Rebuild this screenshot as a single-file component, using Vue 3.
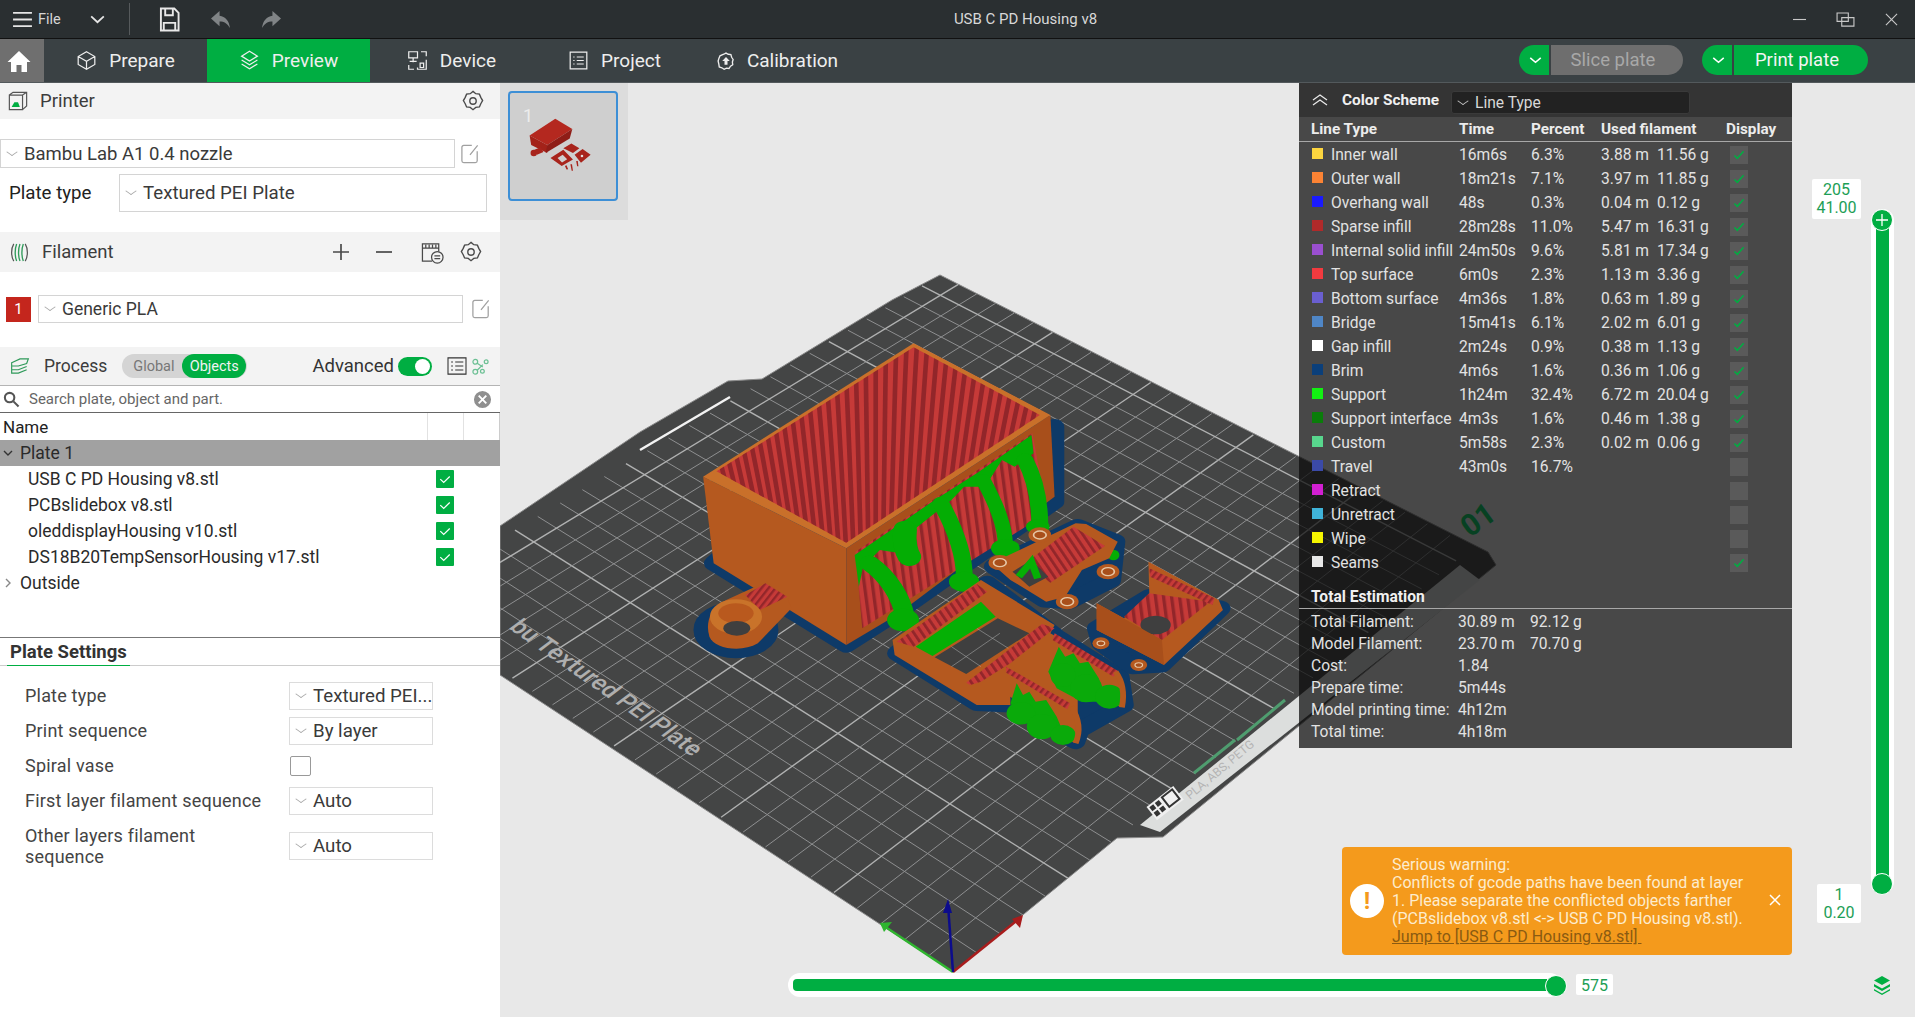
<script setup>
import { computed } from 'vue'

const tabs = [
  { name: 'Prepare', icon: 'cube' },
  { name: 'Preview', icon: 'layers', active: true },
  { name: 'Device', icon: 'device' },
  { name: 'Project', icon: 'list' },
  { name: 'Calibration', icon: 'calib' }
]

const objects = [
  'USB C PD Housing v8.stl',
  'PCBslidebox v8.stl',
  'oleddisplayHousing v10.stl',
  'DS18B20TempSensorHousing v17.stl'
]

const lineTypes = [
  ['#fcd53f', 'Inner wall', '16m6s', '6.3%', '3.88 m', '11.56 g', true],
  ['#fb8334', 'Outer wall', '18m21s', '7.1%', '3.97 m', '11.85 g', true],
  ['#1a1aff', 'Overhang wall', '48s', '0.3%', '0.04 m', '0.12 g', true],
  ['#b02a2a', 'Sparse infill', '28m28s', '11.0%', '5.47 m', '16.31 g', true],
  ['#9a4fd0', 'Internal solid infill', '24m50s', '9.6%', '5.81 m', '17.34 g', true],
  ['#f23a3f', 'Top surface', '6m0s', '2.3%', '1.13 m', '3.36 g', true],
  ['#6a5fd0', 'Bottom surface', '4m36s', '1.8%', '0.63 m', '1.89 g', true],
  ['#4f86c6', 'Bridge', '15m41s', '6.1%', '2.02 m', '6.01 g', true],
  ['#ffffff', 'Gap infill', '2m24s', '0.9%', '0.38 m', '1.13 g', true],
  ['#0b3f7a', 'Brim', '4m6s', '1.6%', '0.36 m', '1.06 g', true],
  ['#12f012', 'Support', '1h24m', '32.4%', '6.72 m', '20.04 g', true],
  ['#0a7d0a', 'Support interface', '4m3s', '1.6%', '0.46 m', '1.38 g', true],
  ['#58d68d', 'Custom', '5m58s', '2.3%', '0.02 m', '0.06 g', true],
  ['#3b4aa8', 'Travel', '43m0s', '16.7%', '', '', false],
  ['#d21fd2', 'Retract', '', '', '', '', false],
  ['#3fb3d8', 'Unretract', '', '', '', '', false],
  ['#f5f500', 'Wipe', '', '', '', '', false],
  ['#e8e8e8', 'Seams', '', '', '', '', true]
]

const totals = [
  ['Total Filament:', '30.89 m', '92.12 g'],
  ['Model Filament:', '23.70 m', '70.70 g'],
  ['Cost:', '1.84', ''],
  ['Prepare time:', '5m44s', ''],
  ['Model printing time:', '4h12m', ''],
  ['Total time:', '4h18m', '']
]

// unit square -> bed corners, so the grid gets the same perspective as the plate
const quad = [[953, 972], [397, 601], [940, 275], [1473, 547]]

function makeProjector(p) {
  const [[x0, y0], [x1, y1], [x2, y2], [x3, y3]] = p
  const dx1 = x1 - x2
  const dx2 = x3 - x2
  const sx = x0 - x1 + x2 - x3
  const dy1 = y1 - y2
  const dy2 = y3 - y2
  const sy = y0 - y1 + y2 - y3
  const den = dx1 * dy2 - dx2 * dy1
  const g = (sx * dy2 - dx2 * sy) / den
  const h = (dx1 * sy - sx * dy1) / den
  const a = x1 - x0 + g * x1
  const b = x3 - x0 + h * x3
  const d = y1 - y0 + g * y1
  const e = y3 - y0 + h * y3
  return (u, v) => {
    const w = g * u + h * v + 1
    return [(a * u + b * v + x0) / w, (d * u + e * v + y0) / w]
  }
}

const gridLines = computed(() => {
  const project = makeProjector(quad)
  const lines = []
  const n = 26
  for (let i = 1; i < n; i++) {
    const t = i / n
    const pairs = [[project(t, 0), project(t, 1)], [project(0, t), project(1, t)]]
    for (const [from, to] of pairs) {
      lines.push({ x1: from[0], y1: from[1], x2: to[0], y2: to[1], major: i % 5 === 0 })
    }
  }
  return lines
})

// infill on the big top face fans out towards a far point below it
const fanLines = computed(() => {
  const out = []
  for (let x = 40; x < 1200; x += 26) {
    out.push({ x1: x, y1: 0, x2: 560, y2: 2300 })
  }
  return out
})

const pcbTabs = [[855, 788], [950, 705], [1112, 815], [1015, 905]]
const sensorTabs = [[1095, 1030], [1185, 1095]]
const blobs = [
  [1005, 1125, 30, 36], [1060, 1165, 38, 42], [1115, 1190, 34, 36],
  [905, 1240, 34, 34], [955, 1280, 36, 38], [1005, 1305, 30, 30]
]
</script>

<template>
  <div class="app">
    <header class="titlebar">
      <div class="file-menu">
        <svg class="ico-menu" viewBox="0 0 22 18"><path d="M1 2h20M1 9h20M1 16h20" /></svg>
        <span>File</span>
        <svg class="ico-caret" viewBox="0 0 16 10"><path d="M1 1.5l7 6.5 7-6.5" /></svg>
      </div>
      <i class="vline"></i>
      <svg class="ico-save" viewBox="0 0 22 26"><path d="M2 1.5h14l4.5 4.5v18.5H2zM6.500 1.500v7h8v-7M5 24.500v-8h12v8" /></svg>
      <svg class="ico-arrow" viewBox="0 0 22 20"><path d="M10 1L1 9l9 8v-5c5 0 8 2 11 7-1-8-5-12-11-13z" /></svg>
      <svg class="ico-arrow" viewBox="0 0 22 20"><path d="M12 1l9 8-9 8v-5c-5 0-8 2-11 7 1-8 5-12 11-13z" /></svg>
      <div class="title">USB C PD Housing v8</div>
      <div class="win-btns">
        <svg viewBox="0 0 14 14"><path d="M0 7h14" /></svg>
        <svg viewBox="0 0 20 16" class="restore"><path d="M1 1h12v9H1zM6 6h13v9H6z" /></svg>
        <svg viewBox="0 0 14 14"><path d="M1 1l12 12M13 1L1 13" /></svg>
      </div>
    </header>

    <nav class="navbar">
      <div class="home">
        <svg viewBox="0 0 24 24"><path d="M12 2L0.5 13H4v10h5.5v-7h5v7H20V13h3.5z" /></svg>
      </div>
      <div v-for="tab in tabs" :key="tab.name" class="tab" :class="{ active: tab.active }">
        <svg class="tab-ico" :class="tab.icon" viewBox="0 0 24 24">
          <template v-if="tab.icon === 'cube'">
            <path d="M12 2l9.500 5.500v9L12 22l-9.500-5.500v-9zM2.500 7.500L12 13l9.500-5.500M12 13v9" />
          </template>
          <template v-else-if="tab.icon === 'layers'">
            <path d="M12 1.500l9 5.500-9 5.500-9-5.500zM3 11.500l9 5.500 9-5.500M3 16l9 5.500 9-5.500" />
          </template>
          <template v-else-if="tab.icon === 'device'">
            <path d="M2 2h10v7H2zM7 9v5M3 13h8M16 2h6v5M2 17v5h6M22 11v11H12v-2M15 15h4v5h-4z" />
          </template>
          <template v-else-if="tab.icon === 'list'">
            <path d="M2.500 2.500h19v19h-19zM6 8h1.500M10 8h8M6 12h1.500M10 12h8M6 16h1.500M10 16h8" />
          </template>
          <template v-else>
            <path d="M9 3l3-1.500L15 3l3.500.5 1 3.500 2 3-1 3.500.5 3.500-3 2-2 3-3.500-.5-3 1.500-3-2-3.500-1-.5-3.500L1.500 12l1-3.500L4 5z" />
            <path class="fill-white" d="M12 6.500l5 5.500h-3v5h-4v-5H7z" />
          </template>
        </svg>
        <span>{{ tab.name }}</span>
      </div>
      <div class="nav-actions">
        <div class="pill-btn disabled">
          <span class="pill-drop"><svg viewBox="0 0 14 8"><path d="M1 1l6 5 6-5" /></svg></span>
          <span class="pill-label">Slice plate</span>
        </div>
        <div class="pill-btn">
          <span class="pill-drop"><svg viewBox="0 0 14 8"><path d="M1 1l6 5 6-5" /></svg></span>
          <span class="pill-label">Print plate</span>
        </div>
      </div>
    </nav>

    <main class="workspace">
      <aside class="sidebar">
        <section class="side-head printer-head">
          <svg class="head-ico" viewBox="0 0 22 22">
            <path class="thin" d="M1.500 4.500h14.500v16H1.500zM1.500 4.500l4-3h15v15l-4.500 4M16 4.500l4.500-3" />
            <path class="grn" d="M4 17.500l3-5h4l2 5z" />
          </svg>
          <span class="head-text">Printer</span>
          <svg class="gear right-gear" viewBox="0 0 24 24"><path d="M12 1.500l3 2.500 4 .500 1.500 3.500 2 3.500-2 3.500-1.500 3.500-4 .500-3 2.500-3-2.500-4-.500L3.500 15l-2-3.500 2-3.500L5 4.500 9 4z" /><circle cx="12" cy="12" r="3.500" /></svg>
        </section>

        <div class="printer-row">
          <div class="select printer-select"><i class="chev"></i>Bambu Lab A1 0.4 nozzle</div>
          <svg class="edit-ico" viewBox="0 0 20 22"><path d="M12 1.500H3a2 2 0 0 0-2 2v15a2 2 0 0 0 2 2h13a2 2 0 0 0 2-2V8M18.500 1.500L10 12" /></svg>
        </div>
        <div class="plate-row">
          <span class="plate-label">Plate type</span>
          <div class="select plate-select"><i class="chev"></i>Textured PEI Plate</div>
        </div>

        <section class="side-head filament-head">
          <svg class="head-ico fil-ico" viewBox="0 0 20 22">
            <path class="thin" d="M4 2c-3 5-3 13 0 18M16 2c3 5 3 13 0 18" />
            <path class="grn-line" d="M7 2c-2 5-2 13 0 18M10.500 2c-2 5-2 13 0 18M14 2c-2 5-2 13 0 18" />
          </svg>
          <span class="head-text">Filament</span>
          <svg class="act-ico plus" viewBox="0 0 16 16"><path d="M8 0v16M0 8h16" /></svg>
          <svg class="act-ico minus" viewBox="0 0 16 16"><path d="M0 8h16" /></svg>
          <svg class="act-ico sync" viewBox="0 0 24 24">
            <path d="M1.500 15V3h17v8M1.500 7.500h17M5 4v3.500M8.500 4v3.500M12 4v3.500M15.500 4v3.500M1.500 15v6h10" />
            <circle cx="17" cy="17" r="6" /><path d="M14 15.500h6M20 18.500h-6" />
          </svg>
          <svg class="gear" viewBox="0 0 24 24"><path d="M12 1.500l3 2.500 4 .500 1.500 3.500 2 3.500-2 3.500-1.500 3.500-4 .500-3 2.500-3-2.500-4-.500L3.500 15l-2-3.500 2-3.500L5 4.500 9 4z" /><circle cx="12" cy="12" r="3.500" /></svg>
        </section>

        <div class="filament-row">
          <span class="fil-badge">1</span>
          <div class="select fil-select"><i class="chev"></i>Generic PLA</div>
          <svg class="edit-ico" viewBox="0 0 20 22"><path d="M12 1.500H3a2 2 0 0 0-2 2v15a2 2 0 0 0 2 2h13a2 2 0 0 0 2-2V8M18.500 1.500L10 12" /></svg>
        </div>

        <section class="side-head process-head">
          <svg class="head-ico proc-ico" viewBox="0 0 24 20">
            <path class="grn-line" d="M2 6l10-4.500h10L20 7 10 10H2zM2 10.500v4h8l10-4M2 15v3.500h8l10-4" />
          </svg>
          <span class="head-text">Process</span>
          <div class="switch-pill"><span class="off">Global</span><span class="on">Objects</span></div>
          <span class="adv">Advanced</span>
          <span class="toggle"><i></i></span>
          <svg class="list-btn" viewBox="0 0 22 20"><path d="M1 1h20v18H1zM4.500 5.500h2M9 5.500h9M4.500 10h2M9 10h9M4.500 14.500h2M9 14.500h9" /></svg>
          <svg class="scissor" viewBox="0 0 18 18"><circle cx="3.500" cy="4" r="2.500" /><circle cx="3.500" cy="14.500" r="2.500" /><circle cx="15" cy="4" r="2" /><circle cx="11" cy="14" r="2" /><path d="M5.500 5.500l6 4M5.500 13l6-6" /></svg>
        </section>

        <div class="search">
          <svg class="mag" viewBox="0 0 18 18"><circle cx="7" cy="7" r="5" /><path d="M11 11l5.500 5.500" /></svg>
          <span>Search plate, object and part.</span>
          <svg class="clear" viewBox="0 0 20 20"><circle cx="10" cy="10" r="10" /><path d="M6 6l8 8M14 6l-8 8" /></svg>
        </div>
        <div class="tree-head"><span>Name</span><i></i><i></i></div>
        <div class="tree-row plate-one"><svg class="tw" viewBox="0 0 10 6"><path d="M1 1l4 4 4-4" /></svg>Plate 1</div>
        <div v-for="obj in objects" :key="obj" class="tree-row obj">
          <span>{{ obj }}</span>
          <span class="chk"><svg viewBox="0 0 14 10"><path d="M1.500 4.500L5.500 8.500 12.500 1.500" /></svg></span>
        </div>
        <div class="tree-row"><svg class="tw side" viewBox="0 0 6 10"><path d="M1 1l4 4-4 4" /></svg>Outside</div>

        <div class="settings-tabs"><span>Plate Settings</span></div>
        <div class="settings">
          <div class="set-row">
            <label>Plate type</label>
            <div class="select set-select"><i class="chev"></i>Textured PEI...</div>
          </div>
          <div class="set-row">
            <label>Print sequence</label>
            <div class="select set-select"><i class="chev"></i>By layer</div>
          </div>
          <div class="set-row">
            <label>Spiral vase</label>
            <span class="check-box"></span>
          </div>
          <div class="set-row">
            <label>First layer filament sequence</label>
            <div class="select set-select"><i class="chev"></i>Auto</div>
          </div>
          <div class="set-row tall">
            <label>Other layers filament<br>sequence</label>
            <div class="select set-select"><i class="chev"></i>Auto</div>
          </div>
        </div>
      </aside>

      <section class="canvas">
        <svg class="scene" viewBox="500 83 1415 934" preserveAspectRatio="none">
          <defs>
            <pattern id="stripes" width="17" height="17" patternUnits="userSpaceOnUse" patternTransform="rotate(-28)">
              <rect width="17" height="17" fill="#c63a38" />
              <rect width="7" height="17" fill="#92262a" />
            </pattern>
            <pattern id="stripesB" width="14" height="14" patternUnits="userSpaceOnUse" patternTransform="rotate(32)">
              <rect width="14" height="14" fill="#c63a38" />
              <rect width="6" height="14" fill="#92262a" />
            </pattern>
            <pattern id="stripesC" width="19" height="19" patternUnits="userSpaceOnUse" patternTransform="rotate(-6)">
              <rect width="19" height="19" fill="#c63a38" />
              <rect width="8" height="19" fill="#92262a" />
            </pattern>
            <clipPath id="topFace"><polygon points="182,514 650,142 950,345 490,728" /></clipPath>
            <clipPath id="bedClip"><polygon points="500,526 640,432 728,381 762,379 892,300 940,275 1488,552 1496,565 1163,837 1117,838 953,972 500,675" /></clipPath>
          </defs>

          <polygon class="bed" points="500,526 640,432 728,381 762,379 892,300 940,275 1488,552 1496,565 1163,837 1117,838 953,972 500,675" />
          <g clip-path="url(#bedClip)">
            <line v-for="(l, i) in gridLines" :key="i" :x1="l.x1" :y1="l.y1" :x2="l.x2" :y2="l.y2" class="grid" :class="{ major: l.major }" />
          </g>
          <path d="M640 450L730 397" class="white-bar" />
          <polygon points="1140,825 1160,832 1480,580 1460,565" fill="#dcdedd" />
          <path d="M1194 773L1235 740M1237 740L1285 700" class="bed-green" />
          <g transform="translate(1153 812) rotate(-38)">
            <rect x="-2" y="-8" width="34" height="17" fill="#f0f0f0" />
            <rect x="0" y="-6" width="5" height="5" fill="#333" />
            <rect x="7" y="-6" width="5" height="5" fill="#333" />
            <rect x="0" y="1" width="5" height="5" fill="#333" />
            <rect x="7" y="1" width="5" height="5" fill="#333" />
            <rect x="16" y="-6" width="13" height="12" fill="none" stroke="#333" stroke-width="2" />
          </g>
          <text class="strip-text" transform="translate(1190 800) rotate(-40)">PLA, ABS, PETG</text>
          <text class="bed-text" transform="translate(508 628) rotate(35) skewX(-18)">bu Textured PEI Plate</text>
          <text class="bed-num" transform="translate(1470 538) rotate(-36)">01</text>

          <!-- model, in the crop's own coordinates -->
          <g transform="translate(640 300) scale(.4209 .3333)">
            <g class="brim">
              <polygon points="175,790 490,1035 620,930 985,605 985,380 700,500 300,650" />
              <ellipse cx="228" cy="990" rx="78" ry="62" />
              <polygon points="610,1060 800,1210 880,1215 1035,1325 1045,1290 1150,1215 1140,1130 990,1010 960,980 825,850" />
              <polygon points="840,800 1040,680 1130,725 1120,840 1020,905 960,900" />
              <polygon points="1085,985 1210,890 1380,925 1240,1095 1170,1100 1095,1030" />
            </g>

            <!-- main housing -->
            <polygon fill="#b5591f" points="150,530 490,745 490,1035 175,790" />
            <polygon fill="#a84f1b" points="490,745 975,345 985,590 610,945 490,1035" />
            <polygon fill="#c9702a" points="150,530 650,130 975,345 490,745" />
            <polygon fill="#c63a38" points="182,514 650,142 950,345 490,728" />
            <g clip-path="url(#topFace)">
              <line v-for="(l, i) in fanLines" :key="i" :x1="l.x1" :y1="l.y1" :x2="l.x2" :y2="l.y2" class="fan" />
            </g>
            <polygon fill="url(#stripesC)" points="512,755 932,400 968,640 528,985" />

            <!-- trees under the overhang -->
            <polygon class="tree-fill" points="510,765 625,665 700,600 800,520 930,405 935,460 890,500 860,480 820,560 770,560 740,600 700,640 650,690 620,760 570,750 530,800 520,860" />
            <g class="tree">
              <path d="M545 790C590 830 620 890 630 950" stroke-width="46" />
              <path d="M630 690C625 730 635 760 640 770" stroke-width="56" />
              <path d="M715 610C750 690 775 770 770 850" stroke-width="40" />
              <path d="M815 540C845 610 870 680 868 745" stroke-width="36" />
              <path d="M915 480C940 540 950 610 950 680" stroke-width="40" />
            </g>
            <g fill="#04ad04">
              <ellipse cx="625" cy="960" rx="38" ry="34" />
              <ellipse cx="770" cy="845" rx="36" ry="30" />
              <ellipse cx="868" cy="745" rx="34" ry="28" />
              <ellipse cx="945" cy="680" rx="28" ry="22" />
              <ellipse cx="1125" cy="765" rx="14" ry="16" />
            </g>

            <!-- screw tab -->
            <path fill="#b5591f" d="M350 895L300 845 205 900C165 925 155 970 165 1010 175 1045 240 1060 280 1030L360 925z" />
            <path fill="url(#stripesB)" d="M298 850L350 890 285 930 250 885z" />
            <ellipse cx="228" cy="950" rx="62" ry="52" fill="#c9732a" />
            <ellipse cx="228" cy="940" rx="42" ry="30" fill="#b9591e" />
            <ellipse cx="230" cy="985" rx="32" ry="22" fill="#3f3f3f" />

            <!-- display frame -->
            <polygon fill="#b5591f" points="600,1020 810,840 985,975 975,1000 1135,1115 1150,1222 1125,1215 1040,1120 1040,1330 1010,1320 880,1190 880,1215 800,1215 605,1065" />
            <polygon fill="url(#stripes)" points="610,1025 800,852 825,875 650,1040" />
            <polygon fill="#3f3f3f" points="700,1072 850,955 925,1000 775,1122" />
            <path d="M740 1040l70 60M800 985l75 60M740 1100l115-100" class="grid major" />
            <polygon fill="#05b005" points="655,1040 810,905 845,950 695,1068" />
            <polygon fill="url(#stripes)" points="775,1148 955,972 985,985 880,1090 810,1145 785,1155" />
            <polygon fill="url(#stripesB)" points="985,1000 1135,1112 1125,1130 980,1020" />
            <polygon fill="url(#stripesB)" points="870,1100 1022,1210 1015,1228 870,1118" />
            <g fill="#0aaa0a">
              <path d="M995 1040l15 30 20-10 15 30 20-5 25 50 20 70-60 0-60-40-20-50zM895 1150l15 35 15-10 15 30 25-5 25 50 20 60-60-10-50-50-20-40z" />
              <ellipse v-for="b in blobs" :key="b[0]" :cx="b[0]" :cy="b[1]" :rx="b[2]" :ry="b[3]" />
            </g>
            <path d="M1130 1115C1150 1150 1150 1190 1145 1222M1025 1220C1045 1260 1045 1300 1035 1330" fill="none" stroke="#b5591f" stroke-width="14" />

            <!-- pcb slide box -->
            <polygon fill="#b5591f" points="835,790 1035,670 1060,672 1135,725 1115,775 1050,810 1010,890 965,905 880,840" />
            <polygon fill="url(#stripes)" points="915,790 1030,680 1105,738 975,848" />
            <polygon fill="#3f3f3f" points="885,815 930,780 970,830 925,860" />
            <path d="M900 830l30-45 15 50" fill="none" stroke="#05b005" stroke-width="18" />
            <g v-for="c in pcbTabs" :key="c[0]">
              <ellipse :cx="c[0]" :cy="c[1]" rx="27" ry="23" fill="#b5591f" />
              <ellipse :cx="c[0]" :cy="c[1]" rx="15" ry="12" fill="#a84f1b" stroke="#e6c7a6" stroke-width="4" />
            </g>

            <!-- sensor box -->
            <polygon fill="#b5591f" points="1208,785 1375,900 1385,930 1245,1095 1085,990 1085,910 1150,955 1210,880" />
            <polygon fill="url(#stripesC)" points="1150,950 1210,880 1355,905 1240,1020" />
            <ellipse cx="1225" cy="975" rx="36" ry="28" fill="#3f3f3f" />
            <polygon fill="#a84f1b" points="1085,910 1240,1020 1245,1095 1085,990" />
            <polygon fill="url(#stripesB)" points="1210,805 1365,895 1360,915 1212,830" />
            <g v-for="c in sensorTabs" :key="c[0]">
              <ellipse :cx="c[0]" :cy="c[1]" rx="20" ry="18" fill="#b5591f" />
              <ellipse :cx="c[0]" :cy="c[1]" rx="9" ry="7" fill="#a84f1b" stroke="#e6c7a6" stroke-width="3" />
            </g>
          </g>

          <path d="M953 972L884 926" class="axis" stroke="#2fb52f" />
          <path d="M880 923l12-1-8 10z" fill="#2fb52f" />
          <path d="M953 972L1020 918" class="axis" stroke="#a81c1c" />
          <path d="M1023 915l-3 13-8-9z" fill="#a81c1c" />
          <path d="M953 972L948 905" class="axis" stroke="#0c0c8c" />
          <path d="M948 899l-5 14h9z" fill="#0c0c8c" />
        </svg>

        <div class="thumbs">
          <div class="thumb">
            <span class="thumb-no">1</span>
            <svg viewBox="24 18 330 330">
              <polygon fill="#b4281f" points="85,150 165,98 218,130 140,180" />
              <polygon fill="#a32219" points="85,150 140,180 140,205 90,180" />
              <polygon fill="#8f1d17" points="140,180 218,130 210,160 135,205" />
              <g fill="#a8241c">
                <circle cx="98" cy="205" r="10" />
                <path d="M100 195l20-8 8 15-20 8zM190 190l25-15 25 15-20 15zM225 210l25-18 25 18-30 25z" />
                <path fill-rule="evenodd" d="M150 220l40-25 30 30-35 20zM172 220l16-10 14 14-16 10z" />
                <path d="M212 240l5 0 3 20-4 0zM230 230l5 0 2 16-4 0zM195 245l5-2 5 12-5 1z" />
              </g>
              <circle cx="248" cy="214" r="4" fill="#e2e2e2" />
            </svg>
          </div>
        </div>

        <div class="legend">
          <div class="legend-top">
            <svg class="dbl" viewBox="0 0 16 12"><path d="M1 6l7-5 7 5M1 11l7-5 7 5" /></svg>
            <span class="legend-title">Color Scheme</span>
            <div class="legend-select"><i class="chev light"></i>Line Type</div>
          </div>
          <div class="legend-cols">
            <span>Line Type</span><span>Time</span><span>Percent</span><span>Used filament</span><span>Display</span>
          </div>
          <div class="legend-rows">
            <div v-for="row in lineTypes" :key="row[1]" class="legend-row">
              <i class="swatch" :style="{ background: row[0] }"></i>
              <span>{{ row[1] }}</span>
              <span>{{ row[2] }}</span>
              <span>{{ row[3] }}</span>
              <span>{{ row[4] }}</span>
              <span>{{ row[5] }}</span>
              <span class="disp">
                <svg v-if="row[6]" viewBox="0 0 14 12"><path d="M1.500 6.500L5 10 12.500 1.500" /></svg>
              </span>
            </div>
          </div>
          <div class="legend-sum">Total Estimation</div>
          <div class="legend-totals">
            <template v-for="t in totals" :key="t[0]">
              <span>{{ t[0] }}</span><span>{{ t[1] }}</span><span>{{ t[2] }}</span>
            </template>
          </div>
        </div>

        <div class="warning">
          <span class="warn-ico">!</span>
          <div class="warn-text">
            Serious warning:<br>
            Conflicts of gcode paths have been found at layer<br>
            1. Please separate the conflicted objects farther<br>
            (PCBslidebox v8.stl &lt;-&gt; USB C PD Housing v8.stl).<br>
            <u>Jump to [USB C PD Housing v8.stl]&nbsp;</u>
          </div>
          <svg class="warn-x" viewBox="0 0 12 12"><path d="M1 1l10 10M11 1L1 11" /></svg>
        </div>

        <div class="vrail"><i class="vfill"></i></div>
        <span class="vthumb top"><svg viewBox="0 0 12 12"><path d="M6 0v12M0 6h12" /></svg></span>
        <span class="vthumb bottom"></span>
        <div class="tip tip-top">205<br>41.00</div>
        <div class="tip tip-bottom">1<br>0.20</div>

        <div class="hrail"><i class="hfill"></i></div>
        <span class="hthumb"></span>
        <div class="tip tip-moves">575</div>

        <svg class="layers-btn" viewBox="0 0 20 20"><path d="M10 1l8 4.500-8 4.500-8-4.500z" /><path d="M2 9l8 4.500L18 9v2.500l-8 4.500-8-4.500z" /><path d="M2 14l8 4.500 8-4.500v1.500L10 20l-8-4.500z" /></svg>
      </section>
    </main>
  </div>
</template>

<style>
html, body { margin: 0; overflow: hidden; background: #e8e8e8; }
</style>

<style scoped>
.app {
  width: 1915px;
  height: 1017px;
  display: flex;
  flex-direction: column;
  font-family: Roboto, "Noto Sans", sans-serif;
  color: #222;
  overflow: hidden;
}

.titlebar {
  height: 39px;
  box-sizing: border-box;
  border-bottom: 1px solid #111;
  background: #2a2f31;
  color: #d6d6d6;
  display: flex;
  align-items: center;
  position: relative;
}
.file-menu { display: flex; align-items: center; width: 129px; padding-left: 12px; box-sizing: border-box; font-size: 14.5px; }
.ico-menu { width: 21px; height: 17px; margin-right: 5px; fill: none; stroke: #e6e6e6; stroke-width: 2; }
.ico-caret { width: 15px; height: 9px; margin-left: 29px; fill: none; stroke: #e6e6e6; stroke-width: 2; }
.vline { width: 1px; height: 32px; background: #565a5c; margin-right: 29px; }
.ico-save { width: 21px; height: 25px; fill: none; stroke: #e8e8e8; stroke-width: 2; margin-right: 30px; }
.ico-arrow { width: 21px; height: 19px; fill: #808486; margin-right: 30px; }
.title {
  position: absolute;
  left: 136px;
  right: 0;
  text-align: center;
  font-size: 15px;
  color: #d8d8d8;
  pointer-events: none;
}
.win-btns { margin-left: auto; display: flex; align-items: center; gap: 30px; padding-right: 17px; }
.win-btns svg { width: 13px; height: 13px; fill: none; stroke: #c8c8c8; stroke-width: 1.2; }
.win-btns .restore { width: 19px; height: 15px; }

.navbar {
  height: 44px;
  background: #3a4144;
  display: flex;
  color: #eee;
  font-size: 19px;
  border-bottom: 1px solid #53595c;
  box-sizing: border-box;
}
.home { width: 44px; background: #6f6f6f; display: flex; align-items: center; justify-content: center; padding-right: 6px; box-sizing: border-box; }
.home svg { width: 24px; height: 24px; fill: #fff; }
.tab { width: 163px; display: flex; align-items: center; justify-content: center; gap: 12px; }
.tab.active { background: #00ae42; }
.tab-ico { width: 21px; height: 21px; fill: none; stroke: #eee; stroke-width: 1.4; }
.tab-ico.calib { width: 18px; height: 18px; stroke-width: 1.8; }
.fill-white { fill: #eee; stroke: none; }
.nav-actions { margin-left: auto; display: flex; gap: 19px; padding: 6px 47px 0 0; }
.pill-btn { height: 30px; display: flex; font-size: 18.5px; }
.pill-drop {
  width: 30px;
  background: #00ae42;
  border-radius: 15px 0 0 15px;
  display: flex;
  align-items: center;
  justify-content: center;
  margin-right: 2px;
}
.pill-drop svg { width: 13px; height: 7px; fill: none; stroke: #fff; stroke-width: 1.8; margin-left: 3px; }
.pill-label {
  width: 134px;
  background: #00ae42;
  border-radius: 0 15px 15px 0;
  display: flex;
  align-items: center;
  justify-content: center;
  color: #f4f4f4;
  padding-right: 8px;
  box-sizing: border-box;
}
.disabled .pill-label { background: #6e6e6e; color: #a8a8a8; width: 132px; }

.workspace { flex: 1; display: flex; min-height: 0; }

.sidebar { width: 500px; background: #fff; flex: none; font-size: 18px; }
.side-head {
  display: flex;
  align-items: center;
  background: #f3f3f3;
}
.head-ico { width: 20px; height: 20px; margin-left: 8px; fill: none; }
.head-text { font-size: 18.5px; color: #3c3c3c; margin-left: 12px; }
.thin { stroke: #555; stroke-width: 1.3; fill: none; }
.grn { fill: #00ae42; }
.grn-line { stroke: #2f9a5a; stroke-width: 1.4; fill: none; }
.gear { width: 22px; height: 22px; fill: none; stroke: #4a4a4a; stroke-width: 1.5; }
.right-gear { margin-left: auto; margin-right: 16px; }
.printer-head { height: 36px; }
.printer-row { display: flex; align-items: center; margin-top: 20px; height: 29px; }
.select {
  box-sizing: border-box;
  border: 1px solid #d4d4d4;
  display: flex;
  align-items: center;
  background: #fff;
  color: #3a3a3a;
  white-space: nowrap;
  overflow: hidden;
}
.chev {
  width: 7px;
  height: 7px;
  border-right: 1.2px solid #a8a8a8;
  border-bottom: 1.2px solid #a8a8a8;
  transform: scaleY(.7) rotate(45deg);
  margin: -4px 8px 0 7px;
  flex: none;
}
.chev.light { border-color: #c8c8c8; }
.printer-select { width: 455px; height: 29px; font-size: 18.5px; }
.edit-ico { width: 18px; height: 20px; margin-left: 6px; fill: none; stroke: #a0a0a0; stroke-width: 1.4; }
.plate-row { display: flex; align-items: center; height: 38px; margin-top: 6px; }
.plate-label { width: 119px; padding-left: 9px; box-sizing: border-box; font-size: 18.7px; color: #222; }
.plate-select { width: 368px; height: 38px; font-size: 18.7px; }
.filament-head { height: 40px; margin-top: 20px; }
.fil-ico { margin-left: 9px; width: 21px; height: 21px; }
.act-ico { width: 16px; height: 16px; fill: none; stroke: #4a4a4a; stroke-width: 1.7; }
.plus { margin-left: auto; margin-right: 23px; position: relative; left: -4px; }
.minus { margin-right: 29px; }
.sync { width: 23px; height: 23px; stroke-width: 1.3; margin-right: 16px; }
.filament-head .gear { margin-right: 18px; }
.filament-row { display: flex; align-items: center; margin-top: 23px; height: 28px; padding-left: 6px; }
.fil-badge {
  width: 25px;
  height: 25px;
  background: #c4261d;
  color: #fff;
  font-size: 15px;
  display: flex;
  align-items: center;
  justify-content: center;
  margin-right: 7px;
}
.fil-select { width: 425px; height: 28px; font-size: 17.5px; }
.filament-row .edit-ico { margin-left: 9px; }

.process-head { height: 38px; margin-top: 24px; }
.proc-ico { margin-left: 10px; width: 20px; height: 18px; }
.process-head .head-text { margin-left: 14px; font-size: 17.5px; }
.switch-pill {
  margin-left: 15px;
  background: #d4d4d4;
  height: 24px;
  border-radius: 12px;
  display: flex;
  align-items: center;
  font-size: 14.5px;
  width: 125px;
}
.off { color: #777; padding-left: 11px; width: 60px; box-sizing: border-box; }
.on {
  background: #00ae42;
  color: #f2f2f2;
  height: 24px;
  border-radius: 12px;
  width: 64px;
  display: flex;
  align-items: center;
  justify-content: center;
}
.adv { margin-left: auto; font-size: 18.5px; color: #333; margin-right: 4px; }
.toggle {
  width: 34px;
  height: 19px;
  border-radius: 10px;
  background: #00ae42;
  position: relative;
  margin-right: 15px;
}
.toggle i {
  position: absolute;
  right: 2px;
  top: 2px;
  width: 15px;
  height: 15px;
  border-radius: 50%;
  background: #fff;
}
.list-btn { width: 20px; height: 18px; fill: none; stroke: #333; stroke-width: 1.2; margin-right: 5px; }
.scissor { width: 17px; height: 17px; fill: none; stroke: #6cc094; stroke-width: 1.3; margin-right: 11px; }

.search {
  height: 28px;
  border-top: 1px solid #b4b4b4;
  border-bottom: 1px solid #666;
  box-sizing: border-box;
  display: flex;
  align-items: center;
  font-size: 15px;
  color: #666;
  padding: 0 8px 0 3px;
}
.mag { width: 17px; height: 17px; fill: none; stroke: #555; stroke-width: 2.2; margin-right: 9px; }
.clear { width: 19px; height: 19px; margin-left: auto; fill: #8f8f8f; stroke: #fff; stroke-width: 2; }
.tree-head {
  height: 27px;
  display: flex;
  align-items: center;
  font-size: 17px;
  padding-left: 3px;
  box-sizing: border-box;
  border-right: 1px solid #ccc;
}
.tree-head span { flex: 1; }
.tree-head i { width: 36px; height: 100%; border-left: 1px solid #e2e2e2; box-sizing: border-box; }
.tree-row {
  height: 26px;
  display: flex;
  align-items: center;
  font-size: 17.5px;
  padding-left: 20px;
  position: relative;
  color: #2a2a2a;
}
.plate-one { background: #a1a1a1; }
.tw { position: absolute; left: 3px; top: 10px; width: 10px; height: 6px; fill: none; stroke: #333; stroke-width: 1.4; }
.tw.side { left: 5px; top: 8px; width: 6px; height: 10px; stroke: #888; }
.obj { padding-left: 28px; justify-content: space-between; padding-right: 46px; }
.chk {
  width: 18px;
  height: 18px;
  background: #00ae42;
  border-radius: 1px;
  display: flex;
  align-items: center;
  justify-content: center;
}
.chk svg { width: 12px; height: 9px; fill: none; stroke: #fff; stroke-width: 1.4; }

.settings-tabs {
  margin-top: 41px;
  height: 29px;
  box-sizing: border-box;
  border-top: 1px solid #777;
  border-bottom: 1px solid #ccc;
  padding-left: 7px;
  display: flex;
}
.settings-tabs span {
  font-size: 18.5px;
  font-weight: 700;
  color: #333;
  padding: 0 3px;
  border-bottom: 1px solid #00ae42;
  margin-bottom: -1px;
  line-height: 28px;
  height: 27px;
}
.settings { padding: 12px 0 0 25px; display: flex; flex-direction: column; }
.set-row { display: flex; align-items: center; height: 35px; font-size: 18px; letter-spacing: .2px; color: #444; }
.set-row label { width: 264px; flex: none; }
.set-row.tall { height: 52px; margin-top: 2px; }
.set-row.tall label { line-height: 21px; }
.set-select { width: 144px; height: 28px; font-size: 18.7px; letter-spacing: 0; border-color: #dcdcdc; }
.check-box {
  width: 21px;
  height: 20px;
  box-sizing: border-box;
  border: 1px solid #999;
  border-radius: 2px;
  margin-left: 1px;
}

.canvas { flex: 1; position: relative; background: #e8e8e8; overflow: hidden; }
.scene { position: absolute; inset: 0; width: 100%; height: 100%; }
.bed { fill: #444545; stroke: #8a8a8a; stroke-width: 1; }
.grid { stroke: #8e8f90; stroke-width: 1; fill: none; }
.grid.major { stroke: #b0b1b1; stroke-width: 1.4; }
.white-bar { stroke: #f2f2f2; stroke-width: 2.5; }
.bed-green { stroke: #4f9d6f; stroke-width: 3; fill: none; }
.strip-text { font-size: 12px; fill: #b4b4b4; font-family: Roboto, sans-serif; }
.bed-text { font-size: 23.5px; fill: #aeaeae; font-weight: 500; font-family: Roboto, sans-serif; }
.bed-num { font-size: 30px; fill: #00d060; font-weight: 700; font-family: Roboto, sans-serif; }
.brim polygon, .brim ellipse { fill: #0e3a68; stroke: #0e3a68; stroke-width: 46; stroke-linejoin: round; }
.fan { stroke: #92262a; stroke-width: 11; }
.tree path { fill: none; stroke: #04ad04; stroke-linecap: round; }
.tree-fill { fill: #04ad04; }
.axis { stroke-width: 2.5; fill: none; }

.thumbs {
  position: absolute;
  left: 0;
  top: 0;
  width: 128px;
  height: 137px;
  background: #dcdcdc;
  box-sizing: border-box;
  padding: 8px 0 0 8px;
}
.thumb {
  width: 110px;
  height: 110px;
  box-sizing: border-box;
  border: 2px solid #3d8fd6;
  border-radius: 4px;
  background: #cfcfcf;
  position: relative;
}
.thumb svg { position: absolute; left: 0; top: 0; width: 100%; height: 100%; }
.thumb-no { position: absolute; left: 13px; top: 12px; color: #ececec; font-size: 18px; z-index: 1; }

.legend {
  position: absolute;
  left: 799px;
  top: 0;
  width: 493px;
  height: 665px;
  background: rgba(10, 10, 10, .72);
  color: #e2e2e2;
  font-size: 15.6px;
}
.legend-top {
  height: 34px;
  background: rgba(0, 0, 0, .28);
  display: flex;
  align-items: center;
  padding-left: 13px;
}
.dbl { width: 16px; height: 12px; fill: none; stroke: #e8e8e8; stroke-width: 1.3; }
.legend-title { margin-left: 14px; font-weight: 700; color: #f0f0f0; font-size: 15.4px; width: 109px; white-space: nowrap; }
.legend-select {
  width: 239px;
  height: 23px;
  margin-top: 4px;
  border: 1px solid #3a3a3a;
  border-radius: 3px;
  background: #222;
  box-sizing: border-box;
  display: flex;
  align-items: center;
  color: #d8d8d8;
  padding-top: 1px;
}
.legend-cols {
  height: 25px;
  box-sizing: border-box;
  border-bottom: 1px solid #a8a8a8;
  display: grid;
  grid-template-columns: 148px 72px 70px 125px 1fr;
  align-items: center;
  padding-left: 12px;
  font-weight: 700;
  font-size: 15.3px;
  color: #ececec;
  white-space: nowrap;
}
.legend-rows { padding-top: 1px; }
.legend-row {
  height: 24px;
  display: grid;
  grid-template-columns: 19px 128px 72px 70px 56px 73px 18px;
  align-items: center;
  padding-left: 13px;
  white-space: nowrap;
}
.swatch { width: 11px; height: 11px; margin-top: -3px; }
.disp {
  width: 18px;
  height: 18px;
  background: #5a5a5a;
  display: flex;
  align-items: center;
  justify-content: center;
}
.disp svg { width: 12px; height: 10px; fill: none; stroke: #00ae42; stroke-width: 1.8; }
.legend-sum {
  height: 24px;
  margin-top: 10px;
  box-sizing: border-box;
  border-bottom: 1px solid #a8a8a8;
  padding-left: 12px;
  font-weight: 700;
  color: #f0f0f0;
  line-height: 24px;
}
.legend-totals {
  display: grid;
  grid-template-columns: 147px 72px 1fr;
  grid-auto-rows: 22px;
  align-items: center;
  padding-left: 12px;
  margin-top: 2px;
  white-space: nowrap;
}

.warning {
  position: absolute;
  left: 842px;
  top: 764px;
  width: 450px;
  height: 108px;
  box-sizing: border-box;
  background: #f49a1c;
  border-radius: 4px;
  display: flex;
  align-items: center;
  color: #fdeccd;
  font-size: 16px;
  line-height: 18px;
  padding-left: 8px;
}
.warn-ico {
  width: 34px;
  height: 34px;
  background: #fff;
  border-radius: 50%;
  color: #f49a1c;
  display: flex;
  align-items: center;
  justify-content: center;
  font-size: 24px;
  font-weight: 700;
  flex: none;
  margin-right: 8px;
}
.warn-text { white-space: nowrap; }
.warn-text u { color: #8a5a12; }
.warn-x { position: absolute; right: 11px; top: 47px; width: 12px; height: 12px; fill: none; stroke: #fff; stroke-width: 1.5; }

.vrail {
  position: absolute;
  left: 1371px;
  top: 126px;
  width: 23px;
  height: 684px;
  background: #fff;
  border-radius: 12px;
}
.vfill {
  position: absolute;
  left: 5px;
  top: 8px;
  bottom: 8px;
  width: 13px;
  background: #00ae42;
}
.vthumb {
  position: absolute;
  left: 1371px;
  width: 20px;
  height: 20px;
  border-radius: 50%;
  background: #00ae42;
  border: 1px solid #fff;
  display: flex;
  align-items: center;
  justify-content: center;
}
.vthumb.top { top: 126px; }
.vthumb.bottom { top: 790px; }
.vthumb svg { width: 12px; height: 12px; fill: none; stroke: #fff; stroke-width: 1.3; }
.tip {
  position: absolute;
  background: #fff;
  color: #1d9e56;
  font-size: 16px;
  line-height: 18px;
  text-align: center;
  border-radius: 2px;
}
.tip-top { left: 1312px; top: 96px; width: 49px; height: 40px; padding-top: 2px; box-sizing: border-box; }
.tip-bottom { left: 1317px; top: 801px; width: 44px; height: 39px; padding-top: 2px; box-sizing: border-box; }
.tip-moves { left: 1076px; top: 891px; width: 37px; height: 21px; line-height: 23px; }

.hrail {
  position: absolute;
  left: 288px;
  top: 890px;
  width: 774px;
  height: 24px;
  background: #fff;
  border-radius: 12px;
}
.hfill {
  position: absolute;
  left: 5px;
  top: 6px;
  height: 12px;
  right: 15px;
  background: #00ae42;
  border-radius: 4px 0 0 4px;
}
.hthumb {
  position: absolute;
  left: 1045px;
  top: 892px;
  width: 20px;
  height: 20px;
  border-radius: 50%;
  background: #00ae42;
  border: 1px solid #fff;
}
.layers-btn { position: absolute; left: 1372px; top: 892px; width: 20px; height: 20px; fill: #00ae42; }
</style>
